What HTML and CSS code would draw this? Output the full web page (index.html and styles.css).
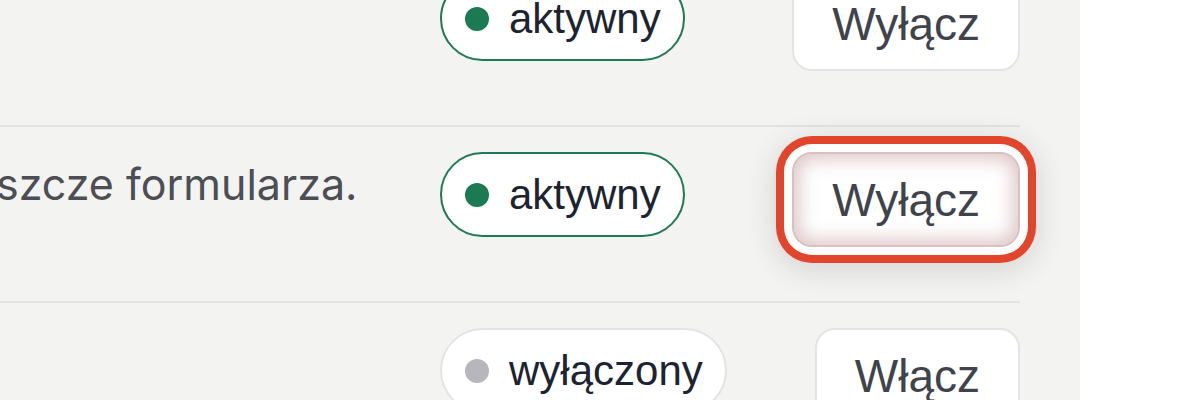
FILE: index.html
```html
<!DOCTYPE html>
<html lang="pl">
<head>
    <meta charset="UTF-8">
    <meta name="viewport" content="width=device-width, initial-scale=1.0">
    <title>Moduły</title>
    <link rel="stylesheet" href="styles.css">
</head>
<body>
    <div class="panel">
        <div class="row">
            <div class="desc"></div>
            <div class="status">
                <span class="pill pill-on"><span class="dot"></span>aktywny</span>
            </div>
            <div class="action">
                <button class="btn">Wyłącz</button>
            </div>
        </div>

        <div class="row">
            <div class="desc"><p class="desc-text">szcze formularza.</p></div>
            <div class="status">
                <span class="pill pill-on"><span class="dot"></span>aktywny</span>
            </div>
            <div class="action">
                <!-- focused button -->
                <button class="btn btn-focus">Wyłącz</button>
            </div>
        </div>

        <div class="row">
            <div class="desc"></div>
            <div class="status">
                <span class="pill pill-off"><span class="dot"></span>wyłączony</span>
            </div>
            <div class="action">
                <button class="btn">Włącz</button>
            </div>
        </div>
    </div>
</body>
</html>
```

FILE: styles.css
```css
body {
    margin: 0;
    padding: 0;
    background-color: #fff;
    overflow: hidden;
}

.panel {
    width: 1080px;
    margin-top: -49px;
    padding-right: 60px;
    box-sizing: border-box;
    background-color: #f3f3f1;
    min-height: 600px;
}

.row {
    display: grid;
    grid-template-columns: 418px 330px 228px;
    column-gap: 22px;
    align-items: start;
    padding-top: 25px;
    min-height: 176px;
    box-sizing: border-box;
    border-bottom: 2px solid #e3e3e1;
}

.desc {
    overflow: hidden;
}

.desc-text {
    margin: 0 0 0 -4px;
    font-family: Inter, "Noto Sans", sans-serif;
    font-size: 43px;
    line-height: 64px;
    color: #4d4e55;
    white-space: nowrap;
}

.pill {
    display: inline-flex;
    align-items: center;
    height: 85px;
    padding: 0 22px 0 23px;
    box-sizing: border-box;
    border: 2px solid #e3e3e3;
    border-radius: 999px;
    background-color: #fff;
    font-family: "Liberation Sans", Arial, sans-serif;
    font-size: 42px;
    color: #1d2330;
}

.dot {
    width: 24px;
    height: 24px;
    border-radius: 50%;
    margin-right: 20px;
    background-color: #b6b6bc;
}

.pill-on {
    border-color: #1d7a52;
}

.pill-on .dot {
    background-color: #1b7a52;
}

.action {
    display: flex;
    justify-content: flex-end;
}

.btn {
    height: 95px;
    padding: 0 38px;
    border: 2px solid #e4e4e2;
    border-radius: 20px;
    background-color: #fff;
    font-family: "Liberation Sans", Arial, sans-serif;
    font-size: 46px;
    color: #3f434b;
    cursor: pointer;
}

.btn-focus {
    border-color: #d8c0c0;
    box-shadow: inset 0 0 18px 5px rgba(190, 140, 140, 0.5),
        0 0 0 8px #fff,
        0 0 0 16px #e1452b,
        0 6px 30px 18px rgba(0, 0, 0, 0.12);
}
```
